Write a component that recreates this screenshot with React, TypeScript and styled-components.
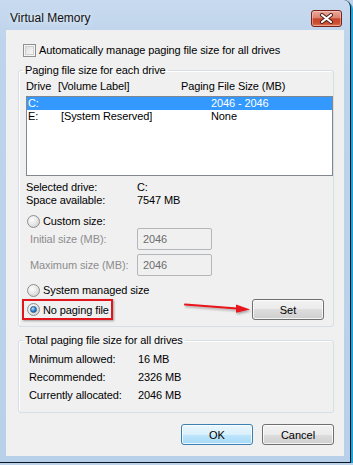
import React from "react";
import styled, { createGlobalStyle } from "styled-components";

const GlobalStyle = createGlobalStyle`
  html, body { margin: 0; padding: 0; }
  body {
    font-family: "Liberation Sans", Arial, sans-serif;
    font-size: 11px;
    letter-spacing: -0.1px;
    color: #000;
    background: #bdd3ec;
  }
`;

const Frame = styled.div`
  box-sizing: border-box;
  width: 351px;
  height: 463px;
  display: flex;
  flex-direction: column;
  background: linear-gradient(180deg, #c8daef 0px, #bed4ec 40px, #b9d0ea 100%);
  border-right: 1px solid #0c1620;
  border-bottom: 1px solid #0c1620;
  border-top-right-radius: 7px;
  box-shadow: 2px 2px 0 #1aa6dc;
`;

const TitleBar = styled.div`
  box-sizing: border-box;
  height: 30px;
  padding: 6px 8px 0 10px;
  display: flex;
  align-items: center;
  justify-content: space-between;
`;

const Title = styled.span`
  font-size: 12px;
  letter-spacing: 0;
  color: #111;
  text-shadow: 0 0 6px rgba(255, 255, 255, 0.9);
`;

const CloseButton = styled.div`
  box-sizing: border-box;
  width: 31px;
  height: 17px;
  border: 1px solid #76221a;
  border-radius: 3px;
  background: linear-gradient(
    180deg,
    #eaaa9c 0%,
    #dd8270 45%,
    #c8452c 52%,
    #cc4f31 82%,
    #e27a5c 100%
  );
  box-shadow: inset 0 0 0 1px rgba(255, 220, 210, 0.45);
  display: flex;
  align-items: center;
  justify-content: center;
`;

const Client = styled.div`
  flex: 1;
  margin: 0 6px 6px 6px;
  background: #f0f0f0;
  padding: 14px 10px 0 12px;
  display: flex;
  flex-direction: column;
`;

const CheckRow = styled.label`
  display: flex;
  align-items: center;
  gap: 3px;
  margin-left: 5px;
  height: 13px;
  line-height: 13px;
`;

const CheckBox = styled.span`
  box-sizing: border-box;
  width: 13px;
  height: 13px;
  flex: none;
  border: 1px solid #8e8f8f;
  background: linear-gradient(135deg, #d6d6d6 0%, #f0f0f0 60%, #fbfbfb 100%);
  box-shadow: inset 0 0 0 1px #f6f6f6, inset 0 0 0 2px #cfcfcf;
`;

const GroupBox = styled.fieldset<{ $pad: number; $top: number; $bottom: number }>`
  margin: 7px 0 0 0;
  padding: ${(p) => p.$top}px 0 ${(p) => p.$bottom}px ${(p) => p.$pad}px;
  border: 1px solid #d5dfe5;
  border-radius: 3px;
  min-width: 0;
  box-shadow: inset 1px 1px 0 #fff;
`;

const Legend = styled.legend<{ $shift: number }>`
  padding: 0 2px;
  margin-left: ${(p) => p.$shift}px;
  line-height: 13px;
`;

const HeaderRow = styled.div`
  display: grid;
  grid-template-columns: 32px 123px 1fr;
  line-height: 13px;
`;

const ListBox = styled.div`
  box-sizing: border-box;
  margin-top: 3px;
  height: 80px;
  border: 1px solid #828790;
  background: #fff;
`;

const ListRow = styled.div<{ $selected?: boolean }>`
  display: grid;
  grid-template-columns: 33px 150px 1fr;
  padding-left: 1px;
  height: 13px;
  line-height: 13px;
  background: ${(p) => (p.$selected ? "#3399ff" : "transparent")};
  color: ${(p) => (p.$selected ? "#fff" : "#000")};
`;

const InfoRow = styled.div<{ $gap?: number }>`
  display: grid;
  grid-template-columns: 111px 1fr;
  line-height: 13px;
  margin-top: ${(p) => p.$gap ?? 0}px;
`;

const RadioRow = styled.label<{ $gap?: number }>`
  display: flex;
  align-items: center;
  gap: 3px;
  margin-left: 1px;
  height: 13px;
  line-height: 13px;
  margin-top: ${(p) => p.$gap ?? 0}px;
`;

const Radio = styled.span`
  box-sizing: border-box;
  width: 13px;
  height: 13px;
  flex: none;
  border-radius: 50%;
  border: 1px solid #8f8f8f;
  background: radial-gradient(circle at 38% 35%, #fdfdfd 0%, #e8e8e8 45%, #c6c6c6 100%);
  display: flex;
  align-items: center;
  justify-content: center;
`;

const RadioDot = styled.span`
  width: 7px;
  height: 7px;
  box-sizing: border-box;
  border-radius: 50%;
  border: 1px solid #2a5a8c;
  background: radial-gradient(circle at 35% 30%, #bfe6ff 0%, #3d93dc 45%, #0b4385 100%);
`;

const FieldRow = styled.div<{ $gap?: number }>`
  display: grid;
  grid-template-columns: 111px 75px;
  align-items: center;
  height: 22px;
  margin-top: ${(p) => p.$gap ?? 0}px;
`;

const DisabledLabel = styled.span`
  padding-left: 4px;
  color: #8d8d8d;
`;

const TextBox = styled.div`
  box-sizing: border-box;
  height: 22px;
  border: 1px solid #b4b7ba;
  border-radius: 2px;
  padding-left: 5px;
  display: flex;
  align-items: center;
  color: #6d6d6d;
  background: #f0f0f0;
`;

const BottomRow = styled.div`
  position: relative;
  display: flex;
  justify-content: space-between;
  align-items: flex-start;
  margin-top: 2px;
  padding-right: 9px;
`;

const Highlight = styled.label`
  box-sizing: border-box;
  height: 21px;
  display: flex;
  align-items: center;
  gap: 3px;
  margin-left: -4px;
  padding: 0 2px 0 3px;
  border: 2px solid #e0161c;
  box-shadow: 1px 1px 2px rgba(0, 0, 0, 0.35);
`;

const Arrow = styled.svg`
  position: absolute;
  left: 158px;
  top: 3px;
`;

const Button = styled.button<{ $default?: boolean }>`
  box-sizing: border-box;
  width: 72px;
  height: 21px;
  padding: 0;
  font: inherit;
  color: #000;
  border-radius: 3px;
  border: 1px solid ${(p) => (p.$default ? "#3c7fb1" : "#707070")};
  background: ${(p) =>
    p.$default
      ? "linear-gradient(180deg, #eaf6fd 0%, #d9f0fc 50%, #bee6fd 50%, #a7d9f5 100%)"
      : "linear-gradient(180deg, #f2f2f2 0%, #ebebeb 50%, #dddddd 50%, #cfcfcf 100%)"};
  box-shadow: inset 0 0 0 1px rgba(255, 255, 255, 0.75);
`;

const StatRow = styled.div`
  display: grid;
  grid-template-columns: 109px 1fr;
  line-height: 18px;
`;

const ButtonRow = styled.div`
  display: flex;
  justify-content: flex-end;
  gap: 9px;
  margin-top: 11px;
`;

const drives = [
  { drive: "C:", label: "", size: "2046 - 2046", selected: true },
  { drive: "E:", label: "[System Reserved]", size: "None", selected: false },
];

const totals = [
  ["Minimum allowed:", "16 MB"],
  ["Recommended:", "2326 MB"],
  ["Currently allocated:", "2046 MB"],
];

export default function App() {
  return (
    <>
      <GlobalStyle />
      <Frame>
        <TitleBar>
          <Title>Virtual Memory</Title>
          <CloseButton>
            <svg width="15" height="11" viewBox="0 0 15 11">
              <path d="M3 2 L12 9 M12 2 L3 9" stroke="#4a1a14" strokeWidth="4" strokeLinecap="round" />
              <path d="M3 2 L12 9 M12 2 L3 9" stroke="#fff" strokeWidth="2.2" strokeLinecap="round" />
            </svg>
          </CloseButton>
        </TitleBar>

        <Client>
          <CheckRow>
            <CheckBox />
            Automatically manage paging file size for all drives
          </CheckRow>

          <GroupBox $pad={7} $top={3} $bottom={6}>
            <Legend $shift={-3}>Paging file size for each drive</Legend>
            <HeaderRow>
              <span>Drive</span>
              <span>[Volume Label]</span>
              <span>Paging File Size (MB)</span>
            </HeaderRow>
            <ListBox>
              {drives.map((d) => (
                <ListRow key={d.drive} $selected={d.selected}>
                  <span>{d.drive}</span>
                  <span>{d.label}</span>
                  <span>{d.size}</span>
                </ListRow>
              ))}
            </ListBox>

            <InfoRow $gap={5}>
              <span>Selected drive:</span>
              <span>C:</span>
            </InfoRow>
            <InfoRow>
              <span>Space available:</span>
              <span>7547 MB</span>
            </InfoRow>

            <RadioRow $gap={8}>
              <Radio />
              Custom size:
            </RadioRow>
            <FieldRow>
              <DisabledLabel>Initial size (MB):</DisabledLabel>
              <TextBox>2046</TextBox>
            </FieldRow>
            <FieldRow $gap={4}>
              <DisabledLabel>Maximum size (MB):</DisabledLabel>
              <TextBox>2046</TextBox>
            </FieldRow>

            <RadioRow $gap={8}>
              <Radio />
              System managed size
            </RadioRow>
            <BottomRow>
              <Highlight>
                <Radio>
                  <RadioDot />
                </Radio>
                No paging file
              </Highlight>
              <Arrow width="68" height="14" viewBox="0 0 68 14">
                <defs>
                  <filter id="sh" x="-10%" y="-50%" width="120%" height="200%">
                    <feDropShadow dx="1" dy="1.5" stdDeviation="0.8" floodColor="#000" floodOpacity="0.35" />
                  </filter>
                </defs>
                <g filter="url(#sh)">
                  <path d="M1 2.5 L56 6.8" stroke="#e8141a" strokeWidth="2" strokeLinecap="round" />
                  <path d="M52 2.5 L66 7.6 L52 10.8 Z" fill="#e8141a" />
                </g>
              </Arrow>
              <Button>Set</Button>
            </BottomRow>
          </GroupBox>

          <GroupBox $pad={10} $top={3} $bottom={8}>
            <Legend $shift={-6}>Total paging file size for all drives</Legend>
            {totals.map(([label, value]) => (
              <StatRow key={label}>
                <span>{label}</span>
                <span>{value}</span>
              </StatRow>
            ))}
          </GroupBox>

          <ButtonRow>
            <Button $default>OK</Button>
            <Button>Cancel</Button>
          </ButtonRow>
        </Client>
      </Frame>
    </>
  );
}
